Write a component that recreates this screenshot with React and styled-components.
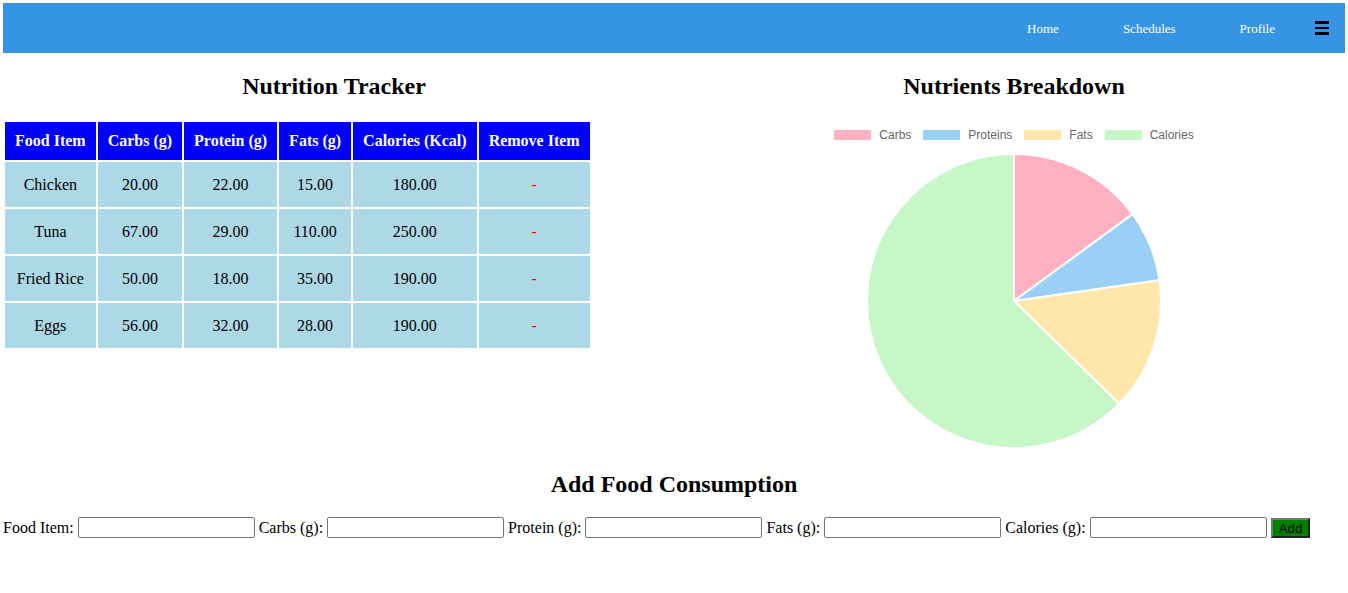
import React from 'react';
import styled, { createGlobalStyle } from 'styled-components';

const GlobalStyle = createGlobalStyle`
  body {
    margin: 0;
    font-family: "Liberation Serif", "Times New Roman", serif;
    font-size: 16px;
    color: #000;
    background: #fff;
  }
`;

const foods = [
  { name: 'Chicken', carbs: 20, protein: 22, fats: 15, calories: 180 },
  { name: 'Tuna', carbs: 67, protein: 29, fats: 110, calories: 250 },
  { name: 'Fried Rice', carbs: 50, protein: 18, fats: 35, calories: 190 },
  { name: 'Eggs', carbs: 56, protein: 32, fats: 28, calories: 190 },
];

const slices = [
  { label: 'Carbs', key: 'carbs', color: '#ffb1c1' },
  { label: 'Proteins', key: 'protein', color: '#9ad0f5' },
  { label: 'Fats', key: 'fats', color: '#ffe6aa' },
  { label: 'Calories', key: 'calories', color: '#c7f6c7' },
];

function PieChart() {
  const totals = slices.map((s) => foods.reduce((sum, f) => sum + f[s.key], 0));
  const total = totals.reduce((a, b) => a + b, 0);
  const cx = 150;
  const cy = 150;
  const r = 147;
  let start = 0;

  const point = (deg) => {
    const rad = (deg * Math.PI) / 180;
    return [cx + r * Math.sin(rad), cy - r * Math.cos(rad)];
  };

  return (
    <svg width="300" height="300" viewBox="0 0 300 300">
      {slices.map((s, i) => {
        const sweep = (totals[i] / total) * 360;
        const [x1, y1] = point(start);
        const [x2, y2] = point(start + sweep);
        const large = sweep > 180 ? 1 : 0;
        start += sweep;
        return (
          <path
            key={s.key}
            d={`M${cx} ${cy} L${x1} ${y1} A${r} ${r} 0 ${large} 1 ${x2} ${y2} Z`}
            fill={s.color}
            stroke="#fff"
            strokeWidth="2"
            strokeLinejoin="round"
          />
        );
      })}
    </svg>
  );
}

export default function App() {
  return (
    <PageStyled>
      <GlobalStyle />
      <NavStyled>
        <NavLinkStyled href="#">Home</NavLinkStyled>
        <NavLinkStyled href="#">Schedules</NavLinkStyled>
        <NavLinkStyled href="#">Profile</NavLinkStyled>
        <BurgerStyled>
          <span />
          <span />
          <span />
        </BurgerStyled>
      </NavStyled>

      <ColumnsStyled>
        <ColumnStyled>
          <HeadingStyled>Nutrition Tracker</HeadingStyled>
          <TableStyled>
            <thead>
              <tr>
                <th>Food Item</th>
                <th>Carbs (g)</th>
                <th>Protein (g)</th>
                <th>Fats (g)</th>
                <th>Calories (Kcal)</th>
                <th>Remove Item</th>
              </tr>
            </thead>
            <tbody>
              {foods.map((f) => (
                <tr key={f.name}>
                  <td>{f.name}</td>
                  <td>{f.carbs.toFixed(2)}</td>
                  <td>{f.protein.toFixed(2)}</td>
                  <td>{f.fats.toFixed(2)}</td>
                  <td>{f.calories.toFixed(2)}</td>
                  <td>
                    <RemoveStyled>-</RemoveStyled>
                  </td>
                </tr>
              ))}
            </tbody>
          </TableStyled>
        </ColumnStyled>

        <ColumnStyled>
          <HeadingStyled>Nutrients Breakdown</HeadingStyled>
          <LegendStyled>
            {slices.map((s) => (
              <LegendItemStyled key={s.key}>
                <LegendBoxStyled color={s.color} />
                {s.label}
              </LegendItemStyled>
            ))}
          </LegendStyled>
          <ChartWrapStyled>
            <PieChart />
          </ChartWrapStyled>
        </ColumnStyled>
      </ColumnsStyled>

      <HeadingStyled $bottom={19}>Add Food Consumption</HeadingStyled>
      <FormStyled onSubmit={(e) => e.preventDefault()}>
        <label>
          Food Item: <InputStyled type="text" />
        </label>{' '}
        <label>
          Carbs (g): <InputStyled type="text" />
        </label>{' '}
        <label>
          Protein (g): <InputStyled type="text" />
        </label>{' '}
        <label>
          Fats (g): <InputStyled type="text" />
        </label>{' '}
        <label>
          Calories (g): <InputStyled type="text" />
        </label>{' '}
        <AddButtonStyled type="submit">Add</AddButtonStyled>
      </FormStyled>
    </PageStyled>
  );
}

const PageStyled = styled.div`
  padding: 3px;
`;

const NavStyled = styled.nav`
  display: flex;
  align-items: center;
  justify-content: flex-end;
  height: 50px;
  background-color: #3594e3;
  padding-right: 16px;
`;

const NavLinkStyled = styled.a`
  color: #fff;
  text-decoration: none;
  font-size: 13px;
  padding: 2px 32px 0;
`;

const BurgerStyled = styled.div`
  display: flex;
  flex-direction: column;
  gap: 3px;
  margin-left: 8px;
  span {
    display: block;
    width: 14px;
    height: 2.5px;
    background: #000;
  }
`;

const ColumnsStyled = styled.div`
  display: grid;
  grid-template-columns: 1fr 1fr;
  column-gap: 18px;
`;

const ColumnStyled = styled.div`
  display: flex;
  flex-direction: column;
  align-items: center;
`;

const HeadingStyled = styled.h2`
  font-size: 24px;
  font-weight: bold;
  text-align: center;
  margin: 20px 0 ${(props) => props.$bottom ?? 20}px;
`;

const TableStyled = styled.table`
  align-self: flex-start;
  border-spacing: 2px;
  th {
    background-color: #0000ff;
    color: #fff;
    font-weight: bold;
    padding: 10px;
    line-height: 18px;
  }
  td {
    background-color: #add8e6;
    text-align: center;
    padding: 14px 10px 13px;
    line-height: 18px;
  }
`;

const RemoveStyled = styled.span`
  color: #ff0000;
  cursor: pointer;
`;

const LegendStyled = styled.div`
  display: flex;
  justify-content: center;
  gap: 12px;
  margin-top: 8px;
  font-family: "Liberation Sans", Arial, sans-serif;
  font-size: 12px;
  line-height: 14px;
  color: #666;
`;

const LegendItemStyled = styled.div`
  display: flex;
  align-items: center;
  gap: 8px;
`;

const LegendBoxStyled = styled.span`
  display: block;
  width: 37px;
  height: 10px;
  background-color: ${(props) => props.color};
`;

const ChartWrapStyled = styled.div`
  margin-top: 9px;
  line-height: 0;
`;

const FormStyled = styled.form`
  padding: 0;
  line-height: 21px;
`;

const InputStyled = styled.input`
  box-sizing: border-box;
  width: 177px;
  height: 21px;
  border: 1px solid #767676;
  border-radius: 2px;
  padding: 1px 2px;
  vertical-align: middle;
  margin: 0 0 4px;
`;

const AddButtonStyled = styled.button`
  font-family: "Liberation Sans", Arial, sans-serif;
  font-size: 13.33px;
  background-color: green;
  color: #000;
  border: 2px outset #767676;
  padding: 1px 6px;
  height: 20px;
  vertical-align: middle;
  margin: 0 0 4px;
`;
